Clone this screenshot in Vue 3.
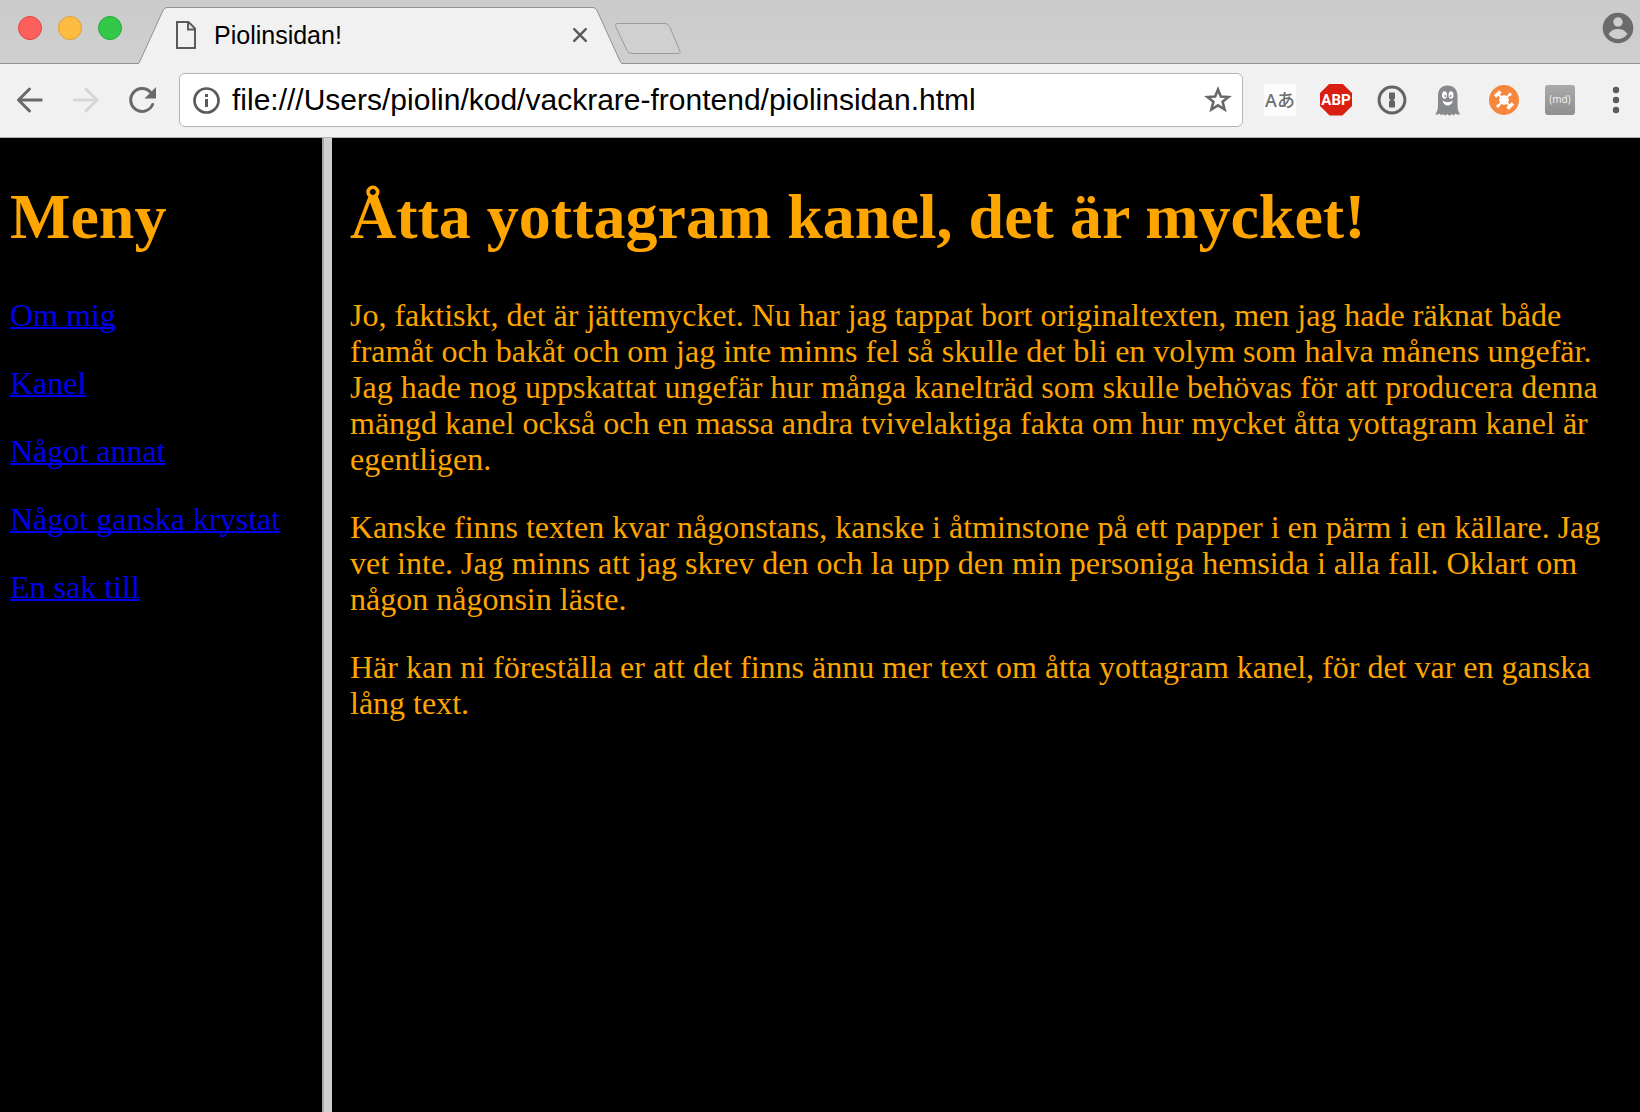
<script setup>
import { ref } from 'vue'

const url = ref('file:///Users/piolin/kod/vackrare-frontend/piolinsidan.html')
const links = ['Om mig', 'Kanel', 'Något annat', 'Något ganska krystat', 'En sak till']
const paragraphs = [
  'Jo, faktiskt, det är jättemycket. Nu har jag tappat bort originaltexten, men jag hade räknat både framåt och bakåt och om jag inte minns fel så skulle det bli en volym som halva månens ungefär. Jag hade nog uppskattat ungefär hur många kanelträd som skulle behövas för att producera denna mängd kanel också och en massa andra tvivelaktiga fakta om hur mycket åtta yottagram kanel är egentligen.',
  'Kanske finns texten kvar någonstans, kanske i åtminstone på ett papper i en pärm i en källare. Jag vet inte. Jag minns att jag skrev den och la upp den min personiga hemsida i alla fall. Oklart om någon någonsin läste.',
  'Här kan ni föreställa er att det finns ännu mer text om åtta yottagram kanel, för det var en ganska lång text.',
]
</script>

<template>
  <div class="window">
    <header class="tabstrip">
      <div class="lights">
        <button class="light red" aria-label="Close window"></button>
        <button class="light yellow" aria-label="Minimize"></button>
        <button class="light green" aria-label="Zoom"></button>
      </div>
      <div class="tab">
        <svg width="30" height="64" viewBox="0 0 30 64">
          <path d="M0 64C1 63.500 1.500 62.500 2 61.500L25 10.500Q26.500 7.500 29 7.500H30V64Z" fill="#f1f1f1" />
          <path d="M0 63.500C1 63 1.500 62 2 61L25 10.500Q26.500 7.500 29 7.500H30" fill="none" stroke="#929292" />
        </svg>
        <div class="tab-body">
          <svg width="20" height="28" viewBox="0 0 20 28" fill="none" stroke="#5a5a5a" stroke-width="2">
            <path d="M1 1H12.500L19 7.500V27H1Z" />
            <path d="M12 1V8.500H19" />
          </svg>
          <span class="title">Piolinsidan!</span>
          <button aria-label="Close tab">
            <svg width="14" height="14" viewBox="0 0 14 14" stroke="#5a5a5a" stroke-width="2.400" stroke-linecap="round">
              <path d="M1.200 1.200L12.800 12.800M12.800 1.200L1.200 12.800" />
            </svg>
          </button>
        </div>
        <svg width="30" height="64" viewBox="0 0 30 64">
          <path d="M30 64C28 63.500 27.500 62.500 27 61.500L4 10.500Q2.500 7.500 0 7.500V64Z" fill="#f1f1f1" />
          <path d="M30 63.500C28.500 63.500 27.500 62 27 61L4 10.500Q2.500 7.500 0 7.500" fill="none" stroke="#929292" />
        </svg>
      </div>
      <button class="newtab" aria-label="New tab">
        <svg width="66" height="32" viewBox="0 0 66 32">
          <path d="M3 .5H50Q53 .5 54.500 3.500L64.500 27Q66 30.500 63 30.500H17Q13.500 30.500 12 27.500L1 4Q-.5 .5 3 .5Z" fill="#d0d0d0" stroke="#9a9a9a" />
        </svg>
      </button>
      <button class="profile" aria-label="Profile">
        <svg width="32" height="32" viewBox="0 0 32 32">
          <circle cx="16" cy="16" r="15.300" fill="#6b6b6b" />
          <circle cx="16" cy="10" r="4.700" fill="#cecece" />
          <path d="M6.500 22C9 18.300 12.500 17 16 17S23 18.300 25.500 22C23 25.500 19.500 27 16 27S9 25.500 6.500 22Z" fill="#cecece" />
        </svg>
      </button>
    </header>

    <div class="toolbar">
      <nav class="group">
        <button class="tool" aria-label="Back">
          <svg width="32" height="32" viewBox="0 0 32 32" fill="none" stroke="#686868" stroke-width="3">
            <path d="M28.500 16H5" /><path d="M15.500 5L4.500 16L15.500 27" stroke-linecap="round" stroke-linejoin="round" />
          </svg>
        </button>
        <button class="tool" aria-label="Forward" disabled>
          <svg width="32" height="32" viewBox="0 0 32 32" fill="none" stroke="#d6d6d6" stroke-width="3">
            <path d="M3 16H27" /><path d="M16 5L27 16L16 27" stroke-linecap="round" stroke-linejoin="round" />
          </svg>
        </button>
        <button class="tool" aria-label="Reload">
          <svg width="32" height="32" viewBox="0 0 32 32">
            <path d="M24.500 8.200A11.400 11.400 0 1 0 26.600 20.500" fill="none" stroke="#686868" stroke-width="3" stroke-linecap="round" />
            <path d="M30 3V14.500H18.500Z" fill="#686868" />
          </svg>
        </button>
      </nav>
      <form class="omnibox" @submit.prevent>
        <svg width="28" height="28" viewBox="0 0 28 28">
          <circle cx="14.500" cy="14.500" r="12" fill="none" stroke="#5a5a5a" stroke-width="2.700" />
          <path d="M13 8H16V11H13ZM13 13H16V21H13Z" fill="#5a5a5a" />
        </svg>
        <input v-model="url" type="text" aria-label="Address" spellcheck="false" />
        <button aria-label="Bookmark">
          <svg width="30" height="30" viewBox="0 0 30 30">
            <path d="M15 4.500L17.800 11.500L25.500 12L19.600 16.800L21.600 24.500L15 20.300L8.400 24.500L10.400 16.800L4.500 12L12.200 11.500Z" fill="none" stroke="#686868" stroke-width="2.600" />
          </svg>
        </button>
      </form>
      <div class="group">
        <button class="tool translate" aria-label="Translate">Aあ</button>
        <button class="tool abp" aria-label="Adblock Plus">ABP</button>
        <button class="tool" aria-label="1Password">
          <svg width="32" height="32" viewBox="0 0 32 32">
            <circle cx="16" cy="16" r="12.900" fill="#efefef" stroke="#646464" stroke-width="3" />
            <path d="M13 8.500H19V14.500L17.500 16L19 17.500V23.500H13V17.500L14.500 16L13 14.500Z" fill="#646464" />
          </svg>
        </button>
        <button class="tool" aria-label="Ghostery">
          <svg width="32" height="32" viewBox="0 0 32 32">
            <path d="M15.500 1.500C22 1.500 25.500 6 25.500 12V21C25.500 25 26 27 28 30Q25 31.500 23.500 29.500Q21.500 32.500 19.500 30Q17.500 33 15.500 30Q13 32.500 11 30Q9 32 7.500 29.500Q5.500 31.500 3.500 30C5.500 27 6 25 6 21V12C6 6 9 1.500 15.500 1.500Z" fill="#88898d" />
            <ellipse cx="12.500" cy="11" rx="2.500" ry="3.800" fill="#fff" /><ellipse cx="19" cy="11" rx="2.500" ry="3.800" fill="#fff" />
            <circle cx="13.300" cy="12" r="1" fill="#88898d" /><circle cx="18.600" cy="12" r="1" fill="#88898d" />
            <path d="M10.500 16.500Q15.700 20 21 16.500Q19.500 21.500 15.700 21.500Q12 21.500 10.500 16.500Z" fill="#fff" />
          </svg>
        </button>
        <button class="tool" aria-label="Drone extension">
          <svg width="32" height="32" viewBox="0 0 32 32">
            <circle cx="16" cy="16" r="15" fill="#f6873d" />
            <g stroke="#fff" fill="#fff">
              <path d="M10 10L22 22M22 10L10 22" stroke-width="2" />
              <path d="M7 12.500L12.500 7.500M19.500 24.500L25 19.500" stroke-width="3.600" />
              <circle cx="16" cy="16" r="4.300" /><circle cx="22" cy="10.500" r="1.200" /><circle cx="10" cy="22" r="1.200" />
            </g>
          </svg>
        </button>
        <button class="tool md" aria-label="Markdown"><span>(md)</span></button>
        <button class="tool" aria-label="Menu">
          <svg width="32" height="32" viewBox="0 0 32 32" fill="#5a5a5a">
            <circle cx="16" cy="6" r="3.200" /><circle cx="16" cy="16" r="3.200" /><circle cx="16" cy="26" r="3.200" />
          </svg>
        </button>
      </div>
    </div>

    <div class="frames">
      <aside class="menu">
        <h1>Meny</h1>
        <p v-for="link in links" :key="link"><a href="#">{{ link }}</a></p>
      </aside>
      <main class="content">
        <h1>Åtta yottagram kanel, det är mycket!</h1>
        <p v-for="(text, i) in paragraphs" :key="i">{{ text }}</p>
      </main>
    </div>
  </div>
</template>

<style>
body {
  margin: 0;
  background: #000;
}
</style>

<style scoped>
* {
  box-sizing: border-box;
}
button {
  padding: 0;
  border: 0;
  background: none;
  flex: none;
}
svg {
  display: block;
  flex: none;
}
.window {
  min-height: 100vh;
  display: flex;
  flex-direction: column;
  font-family: "Liberation Sans", Arial, sans-serif;
}
.tabstrip {
  display: flex;
  height: 64px;
  padding: 0 6px 0 18px;
  background: linear-gradient(#cbcbcb, #cfcfcf);
  box-shadow: inset 0 -1px #929292;
}
.lights {
  display: flex;
  gap: 16px;
  padding-top: 16px;
  margin-right: 16px;
}
.light {
  width: 24px;
  height: 24px;
  border-radius: 50%;
  border: 1px solid;
}
.red {
  background: #fc605c;
  border-color: #e0443f;
}
.yellow {
  background: #fdbc40;
  border-color: #dea034;
}
.green {
  background: #34c84a;
  border-color: #27a934;
}
.tab {
  display: flex;
  flex: 0 1 485px;
}
.tab-body {
  flex: 1;
  display: flex;
  align-items: center;
  height: 57px;
  margin-top: 7px;
  padding: 0 6px 2px 8px;
  background: #f1f1f1;
  border-top: 1px solid #929292;
}
.title {
  flex: 1;
  margin-left: 18px;
  font-size: 25px;
  line-height: 32px;
}
.newtab {
  align-self: flex-start;
  margin: 23px 0 0 -8px;
}
.profile {
  align-self: flex-start;
  margin: 12px 0 0 auto;
}
.toolbar {
  display: flex;
  align-items: center;
  gap: 21px;
  height: 74px;
  padding: 0 8px 2px 14px;
  background: #f1f1f1;
  border-bottom: 1px solid #b0b0b0;
}
.group {
  display: flex;
  gap: 24px;
}
.tool {
  width: 32px;
  height: 32px;
}
.omnibox {
  flex: 1;
  display: flex;
  align-items: center;
  height: 54px;
  padding: 0 9px 0 12px;
  background: #fff;
  border: 1px solid #b6b6b6;
  border-radius: 6px;
}
.omnibox input {
  flex: 1;
  min-width: 0;
  padding: 0;
  margin: 0 12px;
  border: 0;
  outline: 0;
  font: 30px/36px "Liberation Sans", Arial, sans-serif;
  color: #000;
  background: transparent;
}
.translate {
  background: #fcfcfc;
  color: #6e6e6e;
  font: 500 18px/32px "Noto Sans", "Noto Sans CJK JP", sans-serif;
  white-space: nowrap;
}
.abp {
  background: #d81f12;
  color: #fff;
  font: bold 15px/32px Roboto, sans-serif;
  clip-path: polygon(30% 0, 70% 0, 100% 30%, 100% 70%, 70% 100%, 30% 100%, 0 70%, 0 30%);
}
.md span {
  display: block;
  height: 30px;
  margin: 1px;
  border-radius: 3px;
  background: linear-gradient(#aaa, #8f8f8f);
  color: #f4f4f4;
  font: 10px/28px "Open Sans", sans-serif;
}
.frames {
  flex: 1;
  display: flex;
  background: #000;
  color: orange;
  font-family: "Liberation Serif", "Times New Roman", serif;
  font-size: 32px;
  line-height: 36px;
}
.menu {
  flex: none;
  width: 324px;
  padding: 43px 10px 0;
  border-right: 2px solid #a8a8a8;
}
.content {
  flex: 1;
  padding: 43px 16px 0 18px;
  border-left: 8px solid #cfcfcf;
}
h1 {
  margin: 0 0 44px;
  font-size: 64px;
  line-height: 72px;
}
p {
  margin: 0 0 32px;
}
a {
  color: #00e;
  text-decoration: underline;
  text-decoration-thickness: 2px;
  text-decoration-skip-ink: none;
}
</style>
